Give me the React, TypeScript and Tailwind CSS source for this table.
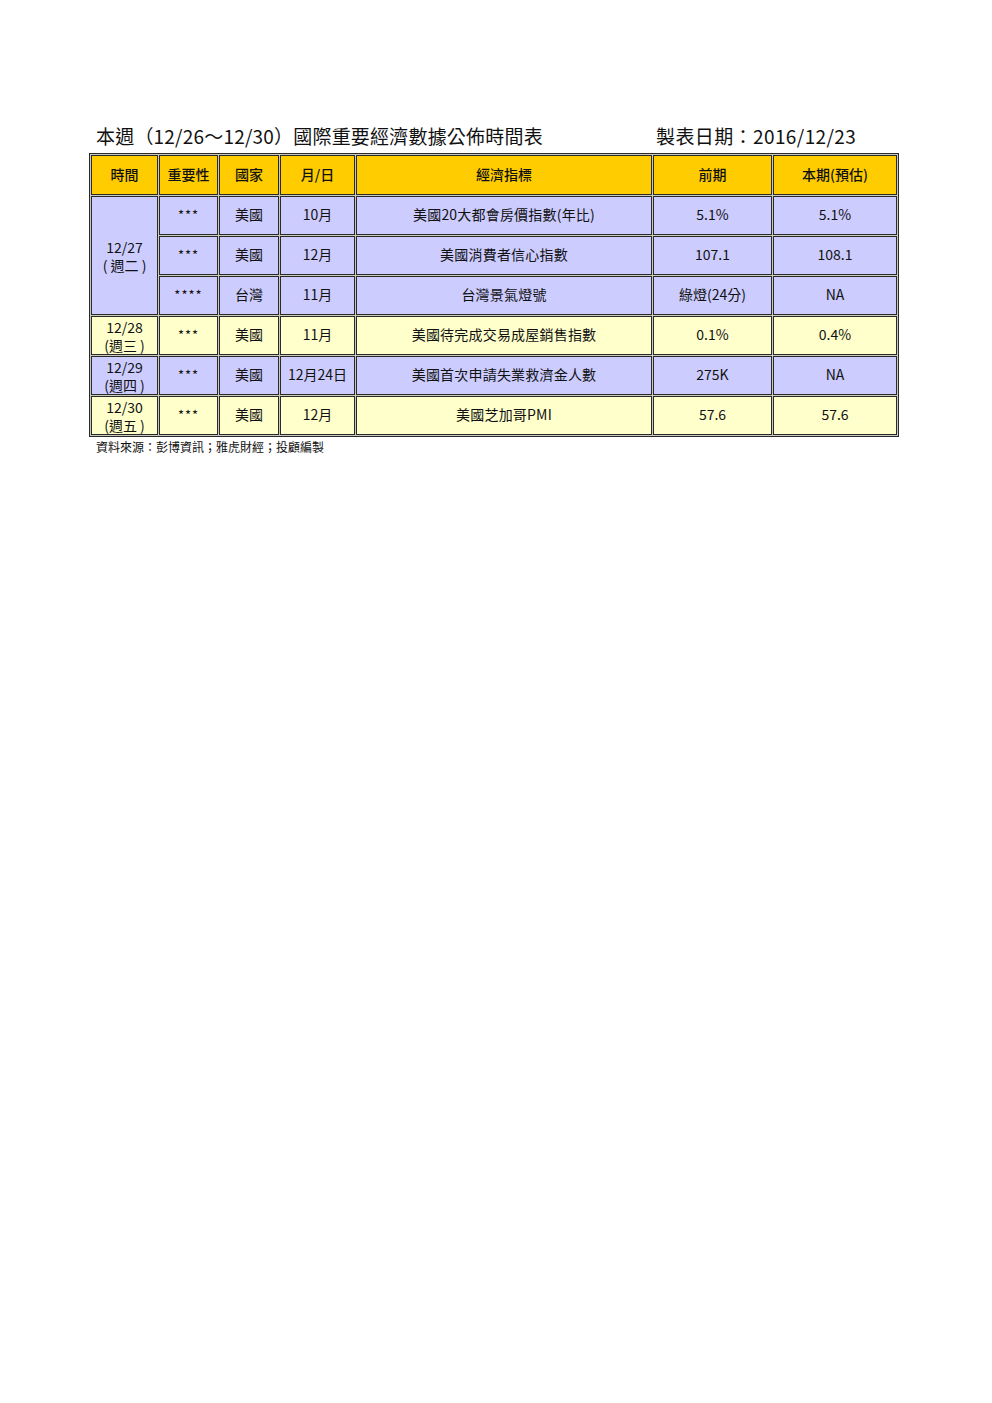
const FONT = { fontFamily: '"Noto Sans CJK TC", "Noto Sans", sans-serif' };

type Row = {
  stars: string;
  country: string;
  date: string;
  name: string;
  prev: string;
  est: string;
  tone: 'blue' | 'cream';
};

const rows: Row[] = [
  { stars: '***', country: '美國', date: '10月', name: '美國20大都會房價指數(年比)', prev: '5.1%', est: '5.1%', tone: 'blue' },
  { stars: '***', country: '美國', date: '12月', name: '美國消費者信心指數', prev: '107.1', est: '108.1', tone: 'blue' },
  { stars: '****', country: '台灣', date: '11月', name: '台灣景氣燈號', prev: '綠燈(24分)', est: 'NA', tone: 'blue' },
  { stars: '***', country: '美國', date: '11月', name: '美國待完成交易成屋銷售指數', prev: '0.1%', est: '0.4%', tone: 'cream' },
  { stars: '***', country: '美國', date: '12月24日', name: '美國首次申請失業救濟金人數', prev: '275K', est: 'NA', tone: 'blue' },
  { stars: '***', country: '美國', date: '12月', name: '美國芝加哥PMI', prev: '57.6', est: '57.6', tone: 'cream' },
];

const dayCells: Record<number, { date: string; day: string; span: number; tone: 'blue' | 'cream' }> = {
  0: { date: '12/27', day: '( 週二 )', span: 3, tone: 'blue' },
  3: { date: '12/28', day: '(週三 )', span: 1, tone: 'cream' },
  4: { date: '12/29', day: '(週四 )', span: 1, tone: 'blue' },
  5: { date: '12/30', day: '(週五 )', span: 1, tone: 'cream' },
};

const toneClass = { blue: 'bg-[#ccccff]', cream: 'bg-[#ffffcc]' };
const base = 'border border-[#2a2a2a] text-center align-middle p-0';
const cell = `${base} pb-[2px]`;

export default function App() {
  return (
    <div className="min-h-[1403px] w-[992px] bg-white text-[#111]" style={FONT}>
      <div className="ml-[89px] w-[810px] pt-[123px]">
        <div className="flex items-end pl-[7px] pb-[4px] text-[19px] leading-[26px]">
          <span className="w-[560px] tracking-[0.2px]">本週（12/26～12/30）國際重要經濟數據公佈時間表</span>
          <span className="tracking-[0.4px]">製表日期：2016/12/23</span>
        </div>
        <table className="w-[810px] table-fixed border-separate border border-[#2a2a2a] bg-[#c9c9bd] [border-spacing:1px]">
          <colgroup>
            <col className="w-[67px]" />
            <col className="w-[59px]" />
            <col className="w-[60px]" />
            <col className="w-[75px]" />
            <col className="w-[296px]" />
            <col className="w-[119px]" />
            <col className="w-[124px]" />
          </colgroup>
          <thead>
            <tr className="h-[40px] text-[14px]">
              {['時間', '重要性', '國家', '月/日', '經濟指標', '前期', '本期(預估)'].map((h) => (
                <th key={h} className={`${cell} bg-[#ffcc00] font-medium`}>
                  {h}
                </th>
              ))}
            </tr>
          </thead>
          <tbody className="text-[14px]">
            {rows.map((r, i) => {
              const day = dayCells[i];
              return (
                <tr key={i} className="h-[39px]">
                  {day && (
                    <td rowSpan={day.span} className={`${base} ${toneClass[day.tone]} leading-[18px]`}>
                      <div>{day.date}</div>
                      <div>{day.day}</div>
                    </td>
                  )}
                  <td className={`${cell} ${toneClass[r.tone]} text-[13px] tracking-[1px]`}>{r.stars}</td>
                  <td className={`${cell} ${toneClass[r.tone]}`}>{r.country}</td>
                  <td className={`${cell} ${toneClass[r.tone]}`}>{r.date}</td>
                  <td className={`${cell} ${toneClass[r.tone]} tracking-[0.2px]`}>{r.name}</td>
                  <td className={`${cell} ${toneClass[r.tone]}`}>{r.prev}</td>
                  <td className={`${cell} ${toneClass[r.tone]}`}>{r.est}</td>
                </tr>
              );
            })}
          </tbody>
        </table>
        <div className="pl-[7px] pt-[2px] text-[12px] leading-[16px]">資料來源：彭博資訊；雅虎財經；投顧編製</div>
      </div>
    </div>
  );
}
